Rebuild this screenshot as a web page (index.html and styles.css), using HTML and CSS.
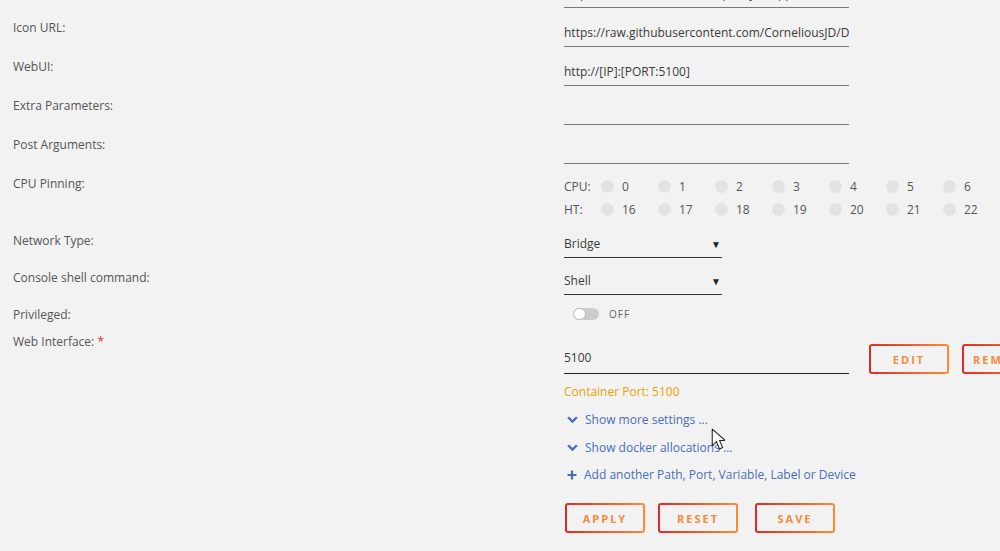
FILE: index.html
```html
<!DOCTYPE html>
<html lang="en">
  <head>
    <meta charset="UTF-8" />
    <title>Update Container</title>
    <link rel="stylesheet" href="styles.css">
  </head>
  <body>
    <form class="settings">
      <div class="row">
        <div class="label">Support Thread:</div>
        <div class="field"><div class="input">https://forums.unraid.net/topic/xyz-support-corneliousjd-repo-flatnotes/</div></div>
      </div>

      <div class="row">
        <div class="label">Icon URL:</div>
        <div class="field"><div class="input">https://raw.githubusercontent.com/CorneliousJD/Docker-Templates/master/icons/flatnotes.png</div></div>
      </div>

      <div class="row">
        <div class="label">WebUI:</div>
        <div class="field"><div class="input">http://[IP]:[PORT:5100]</div></div>
      </div>

      <div class="row">
        <div class="label">Extra Parameters:</div>
        <div class="field"><div class="input"></div></div>
      </div>

      <div class="row">
        <div class="label">Post Arguments:</div>
        <div class="field"><div class="input"></div></div>
      </div>

      <div class="row">
        <div class="label">CPU Pinning:</div>
        <div class="field">
          <div class="cpus">
            <span class="cpu-name">CPU:</span>
            <span class="cpu"><i></i>0</span>
            <span class="cpu"><i></i>1</span>
            <span class="cpu"><i></i>2</span>
            <span class="cpu"><i></i>3</span>
            <span class="cpu"><i></i>4</span>
            <span class="cpu"><i></i>5</span>
            <span class="cpu"><i></i>6</span>
            <span class="cpu-name">HT:</span>
            <span class="cpu"><i></i>16</span>
            <span class="cpu"><i></i>17</span>
            <span class="cpu"><i></i>18</span>
            <span class="cpu"><i></i>19</span>
            <span class="cpu"><i></i>20</span>
            <span class="cpu"><i></i>21</span>
            <span class="cpu"><i></i>22</span>
          </div>
        </div>
      </div>

      <div class="row">
        <div class="label">Network Type:</div>
        <div class="field"><div class="select">Bridge<span class="caret">&#9660;</span></div></div>
      </div>

      <div class="row">
        <div class="label">Console shell command:</div>
        <div class="field"><div class="select">Shell<span class="caret">&#9660;</span></div></div>
      </div>

      <div class="row row-switch">
        <div class="label">Privileged:</div>
        <div class="field">
          <span class="switch"><span class="knob"></span></span>
          <span class="switch-text">OFF</span>
        </div>
      </div>

      <div class="row row-port">
        <div class="label">Web Interface: <span class="required">*</span></div>
        <div class="field">
          <div class="port-line">
            <div class="input input-dark">5100</div>
            <button type="button" class="btn">Edit</button>
            <button type="button" class="btn">Remove</button>
          </div>
          <div class="port-note">Container Port: 5100</div>
          <a class="more" href="#"><svg viewBox="0 0 10 7" width="11" height="8"><path d="M1 1l4 4 4-4" fill="none" stroke="currentColor" stroke-width="2.2"/></svg>Show more settings ...</a>
          <a class="more" href="#"><svg viewBox="0 0 10 7" width="11" height="8"><path d="M1 1l4 4 4-4" fill="none" stroke="currentColor" stroke-width="2.2"/></svg>Show docker allocations ...</a>
          <a class="more" href="#"><svg viewBox="0 0 10 10" width="10" height="10"><path d="M5 0.5v9M0.5 5h9" fill="none" stroke="currentColor" stroke-width="2.2"/></svg>Add another Path, Port, Variable, Label or Device</a>
          <div class="actions">
            <button type="button" class="btn">Apply</button>
            <button type="button" class="btn">Reset</button>
            <button type="button" class="btn btn-save">Save</button>
          </div>
        </div>
      </div>
    </form>

    <svg class="pointer" viewBox="0 0 13 21" width="14" height="22">
      <path d="M1 1v16l4-4 3 7 3-1.3-3-6.7h5.5z" fill="#fff" stroke="#222" stroke-width="1" stroke-linejoin="round"/>
    </svg>
  </body>
</html>
```

FILE: styles.css
```css
* {
  box-sizing: border-box;
}

body {
  margin: 0;
  background: #f2f2f2;
  font-family: "Open Sans", Arial, sans-serif;
  font-size: 12px;
  color: #555;
  overflow: hidden;
  height: 551px;
  position: relative;
}

.settings {
  margin-top: -21px;
}

.row {
  display: flex;
  margin-bottom: 10px;
}

.label {
  width: 564px;
  flex: none;
  padding-left: 13px;
  line-height: 20px;
}

.required {
  color: #e22828;
}

.field {
  flex: 1;
  min-width: 0;
}

.input {
  flex: none;
  width: 285px;
  height: 25px;
  margin-top: 4px;
  padding-top: 1px;
  line-height: 20px;
  border-bottom: 1px solid #777;
  color: #3a3a3a;
  white-space: nowrap;
  overflow: hidden;
}

.input-dark {
  border-bottom-color: #222;
  margin-top: 0;
  padding-top: 0;
  line-height: 18px;
}

/* cpu pinning */
.cpus {
  display: grid;
  grid-template-columns: 37px repeat(7, 57px);
  grid-auto-rows: 23px;
  padding-top: 1px;
  line-height: 23px;
}

.cpu {
  display: flex;
  align-items: center;
}

.cpu i {
  width: 13px;
  height: 13px;
  border-radius: 50%;
  background: #e3e3e3;
  margin-right: 8px;
}

/* selects */
.select {
  position: relative;
  width: 158px;
  height: 24px;
  margin-top: 3px;
  line-height: 20px;
  border-bottom: 1px solid #333;
  color: #3a3a3a;
}

.caret {
  position: absolute;
  right: 1px;
  top: 0;
  font-size: 10px;
  color: #222;
}

/* privileged switch */
.row-switch {
  margin-top: 3px;
  margin-bottom: 7px;
}

.row-switch .field {
  display: flex;
  align-items: center;
  height: 20px;
}

.switch {
  position: relative;
  width: 26px;
  height: 12px;
  margin-left: 9px;
  margin-top: -3px;
  border-radius: 6px;
  background: #ccc;
}

.knob {
  position: absolute;
  left: 0;
  top: 0;
  width: 13px;
  height: 12px;
  border-radius: 6px;
  background: #fff;
  border: 1px solid #bbb;
}

.switch-text {
  margin-left: 10px;
  margin-top: -3px;
  font-size: 10px;
  letter-spacing: 1px;
  color: #666;
}

/* web interface */
.row-port .field {
  padding-top: 12px;
}

.port-line {
  display: flex;
  align-items: flex-end;
  white-space: nowrap;
}

.btn {
  flex: none;
  width: 80px;
  height: 30px;
  margin-left: 13px;
  padding: 0;
  border: 2px solid transparent;
  border-radius: 3px;
  background: linear-gradient(#f2f2f2, #f2f2f2) padding-box,
    linear-gradient(90deg, #e22828, #ff8c2f) border-box;
  font-family: inherit;
  font-size: 11px;
  font-weight: bold;
  letter-spacing: 2px;
  text-transform: uppercase;
  color: #f98a3a;
  cursor: pointer;
}

.port-line .btn:first-of-type {
  margin-left: 20px;
}

.port-note {
  margin-top: 8px;
  line-height: 20px;
  color: #f0a000;
}

.more {
  display: flex;
  align-items: center;
  margin-top: 8px;
  line-height: 20px;
  color: #486dba;
  text-decoration: none;
}

.more:last-of-type {
  margin-top: 7px;
}

.more svg {
  margin: 0 7px 0 3px;
}

.actions {
  display: flex;
  margin-top: 18px;
}

.actions .btn:first-child {
  margin-left: 1px;
}

.actions .btn-save {
  margin-left: 17px;
}

.pointer {
  position: absolute;
  left: 711px;
  top: 428px;
}
```
